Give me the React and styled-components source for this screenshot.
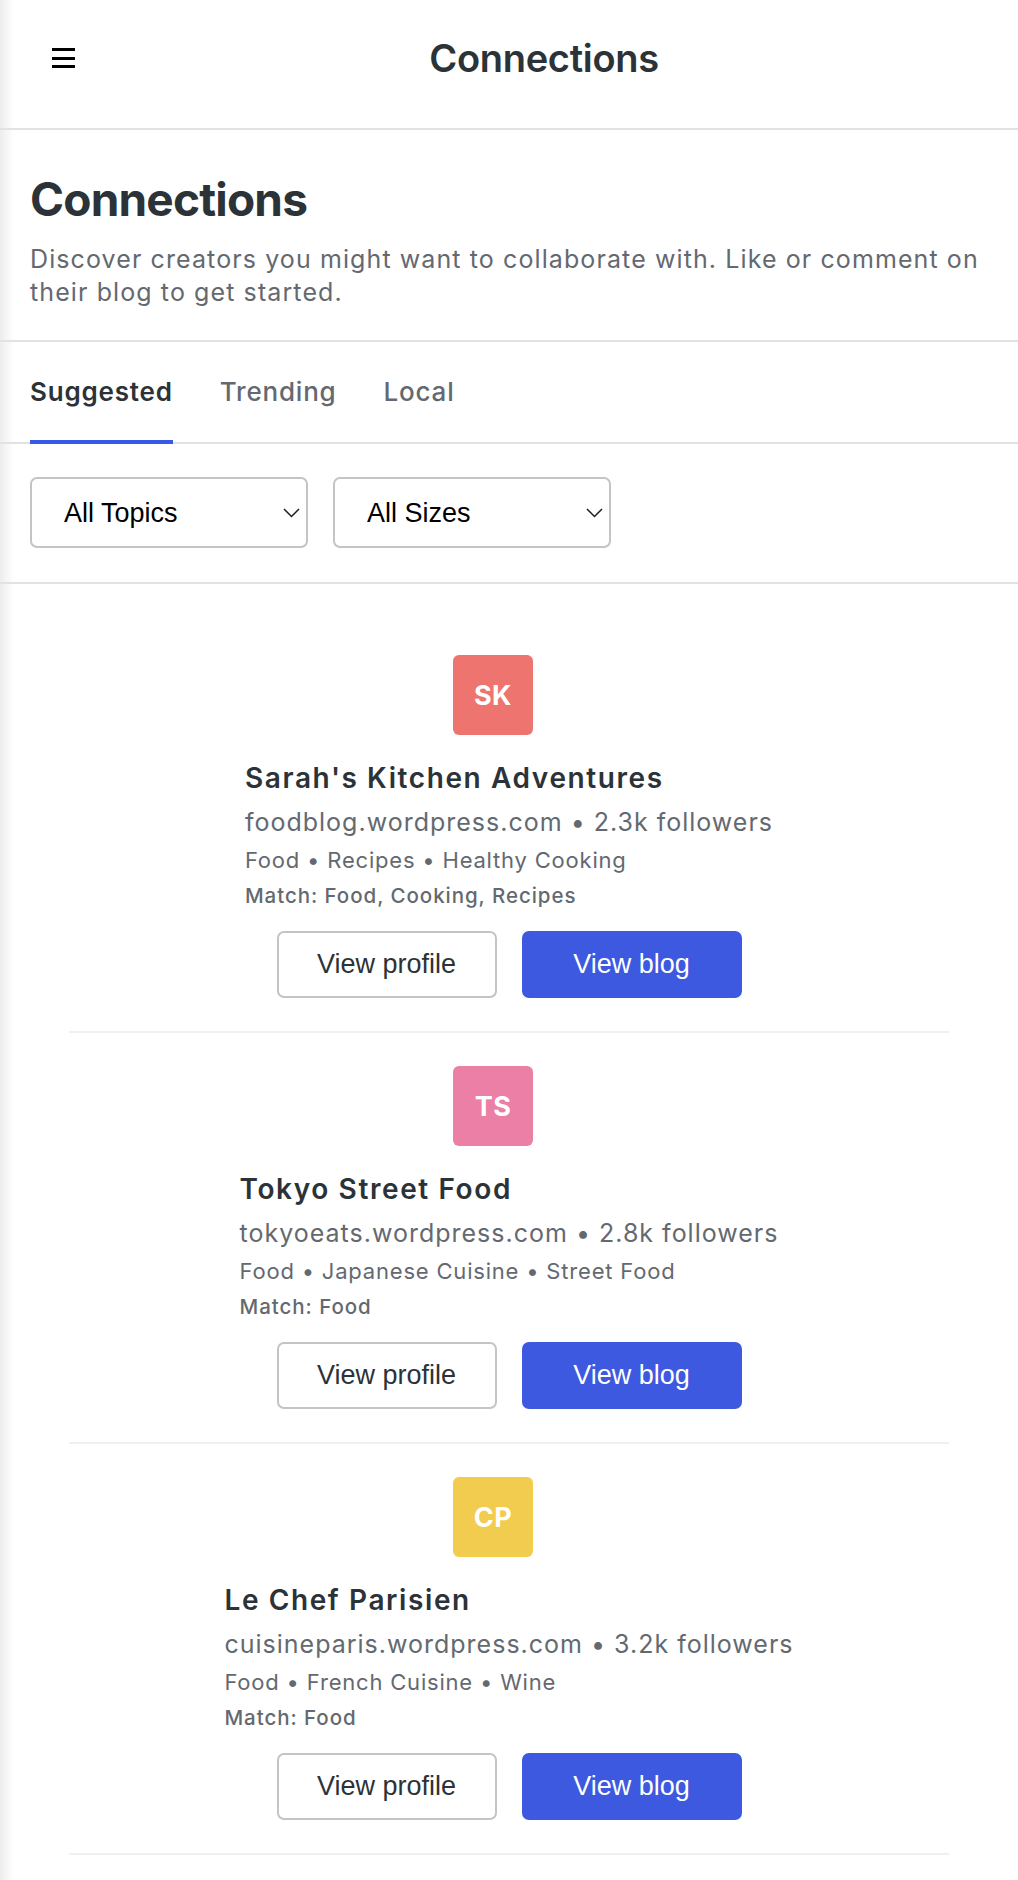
import React from "react";
import styled, { createGlobalStyle } from "styled-components";

const GlobalStyle = createGlobalStyle`
  * { box-sizing: border-box; }
  html, body { margin: 0; padding: 0; }
  body {
    font-family: Inter, "Noto Sans", sans-serif;
    color: #2c3338;
    background: linear-gradient(90deg, #ededed 0px, #ffffff 14px) #ffffff;
  }
`;

const Page = styled.div`
  width: 100%;
  min-height: 1880px;
`;

const Header = styled.header`
  height: 130px;
  display: flex;
  align-items: center;
  gap: 13px;
  padding: 0 18px 12px 52px;
  border-bottom: 2px solid #e0e3e6;
`;

const MenuButton = styled.button`
  width: 23px;
  height: 20px;
  padding: 0;
  border: 0;
  background: transparent;
  display: flex;
  flex-direction: column;
  justify-content: space-between;
  cursor: pointer;
`;

const MenuBar = styled.span`
  display: block;
  height: 3px;
  width: 23px;
  background: #000;
`;

const HeaderTitle = styled.div`
  flex: 1;
  text-align: center;
  font-size: 38px;
  font-weight: 600;
  letter-spacing: -0.3px;
  color: #2c3338;
`;

const Intro = styled.section`
  padding: 42px 18px 31px 30px;
  border-bottom: 2px solid #e0e3e6;
`;

const Title = styled.h1`
  margin: 0;
  font-size: 46px;
  line-height: 55px;
  font-weight: 700;
  letter-spacing: -0.8px;
  color: #2c3338;
`;

const Description = styled.p`
  margin: 16px 0 0;
  font-size: 25px;
  line-height: 33px;
  letter-spacing: 1.1px;
  color: #646970;
`;

const Tabs = styled.nav`
  display: flex;
  gap: 47px;
  padding: 0 30px;
  border-bottom: 2px solid #e0e3e6;
`;

const Tab = styled.a`
  display: block;
  padding: 34px 0 33px;
  font-size: 26px;
  line-height: 31px;
  letter-spacing: 0.8px;
  font-weight: ${(p) => (p.$active ? 600 : 500)};
  color: ${(p) => (p.$active ? "#2c3338" : "#646970")};
  border-bottom: 4px solid ${(p) => (p.$active ? "#3858e9" : "transparent")};
  margin-bottom: -2px;
  text-decoration: none;
  cursor: pointer;
`;

const Filters = styled.div`
  display: flex;
  gap: 25px;
  padding: 33px 30px 34px;
  border-bottom: 2px solid #e0e3e6;
`;

const SelectWrap = styled.div`
  position: relative;
  width: 278px;
  height: 71px;
`;

const Select = styled.select`
  appearance: none;
  -webkit-appearance: none;
  width: 100%;
  height: 100%;
  padding: 0 40px 0 32px;
  border: 2px solid #c3c4c7;
  border-radius: 7px;
  background: #fff;
  font-family: "Liberation Sans", Arial, sans-serif;
  font-size: 27px;
  color: #000;
`;

const Chevron = styled.svg`
  position: absolute;
  right: 8px;
  top: 50%;
  width: 17px;
  height: 10px;
  margin-top: -5px;
  pointer-events: none;
`;

const List = styled.div`
  padding: 38px 69px 0;
`;

const Card = styled.article`
  display: flex;
  flex-direction: column;
  align-items: center;
  padding: 33px 0;
  border-bottom: 2px solid #f0f0f1;
`;

const Avatar = styled.div`
  width: 80px;
  height: 80px;
  margin-right: 32px;
  border-radius: 6px;
  background: ${(p) => p.$color};
  color: #fff;
  display: flex;
  align-items: center;
  justify-content: center;
  font-size: 27px;
  font-weight: 700;
  letter-spacing: 0.5px;
`;

const Info = styled.div`
  margin-top: 25px;
  text-align: left;
`;

const Name = styled.h2`
  margin: 0;
  font-size: 28px;
  line-height: 36px;
  font-weight: 600;
  letter-spacing: 1.6px;
  color: #2c3338;
`;

const Meta = styled.div`
  margin-top: 8px;
  font-size: 25px;
  line-height: 36px;
  letter-spacing: 1px;
  color: #646970;
`;

const Tags = styled.div`
  margin-top: 5px;
  font-size: 22px;
  line-height: 31px;
  letter-spacing: 0.8px;
  color: #646970;
`;

const Match = styled.div`
  margin-top: 5px;
  font-size: 20.5px;
  line-height: 29px;
  letter-spacing: 0.95px;
  font-weight: 500;
  color: #646970;
`;

const Actions = styled.div`
  display: flex;
  gap: 25px;
  margin-top: 21px;
`;

const Button = styled.button`
  width: 220px;
  height: 67px;
  border-radius: 7px;
  font-family: "Liberation Sans", Arial, sans-serif;
  font-size: 27px;
  cursor: pointer;
  border: 2px solid ${(p) => (p.$primary ? "#3c59e0" : "#c3c4c7")};
  background: ${(p) => (p.$primary ? "#3c59e0" : "#fff")};
  color: ${(p) => (p.$primary ? "#fff" : "#2c3338")};
`;

const creators = [
  {
    initials: "SK",
    color: "#ee7470",
    name: "Sarah's Kitchen Adventures",
    domain: "foodblog.wordpress.com",
    followers: "2.3k followers",
    tags: ["Food", "Recipes", "Healthy Cooking"],
    match: "Food, Cooking, Recipes",
  },
  {
    initials: "TS",
    color: "#ec7fa5",
    name: "Tokyo Street Food",
    domain: "tokyoeats.wordpress.com",
    followers: "2.8k followers",
    tags: ["Food", "Japanese Cuisine", "Street Food"],
    match: "Food",
  },
  {
    initials: "CP",
    color: "#f2cc4e",
    name: "Le Chef Parisien",
    domain: "cuisineparis.wordpress.com",
    followers: "3.2k followers",
    tags: ["Food", "French Cuisine", "Wine"],
    match: "Food",
  },
];

function FilterSelect({ options }) {
  return (
    <SelectWrap>
      <Select defaultValue={options[0]}>
        {options.map((o) => (
          <option key={o}>{o}</option>
        ))}
      </Select>
      <Chevron viewBox="0 0 17 10" fill="none">
        <path d="M1 1l7.5 7.5L16 1" stroke="#1e1e1e" strokeWidth="1.5" />
      </Chevron>
    </SelectWrap>
  );
}

export default function App() {
  return (
    <Page>
      <GlobalStyle />
      <Header>
        <MenuButton aria-label="Menu">
          <MenuBar />
          <MenuBar />
          <MenuBar />
        </MenuButton>
        <HeaderTitle>Connections</HeaderTitle>
      </Header>
      <Intro>
        <Title>Connections</Title>
        <Description>
          Discover creators you might want to collaborate with. Like or comment on their blog to get started.
        </Description>
      </Intro>
      <Tabs>
        <Tab $active>Suggested</Tab>
        <Tab>Trending</Tab>
        <Tab>Local</Tab>
      </Tabs>
      <Filters>
        <FilterSelect options={["All Topics", "Food", "Travel", "Tech"]} />
        <FilterSelect options={["All Sizes", "Small", "Medium", "Large"]} />
      </Filters>
      <List>
        {creators.map((c) => (
          <Card key={c.initials}>
            <Avatar $color={c.color}>{c.initials}</Avatar>
            <Info>
              <Name>{c.name}</Name>
              <Meta>
                {c.domain} • {c.followers}
              </Meta>
              <Tags>{c.tags.join(" • ")}</Tags>
              <Match>Match: {c.match}</Match>
            </Info>
            <Actions>
              <Button>View profile</Button>
              <Button $primary>View blog</Button>
            </Actions>
          </Card>
        ))}
      </List>
    </Page>
  );
}
